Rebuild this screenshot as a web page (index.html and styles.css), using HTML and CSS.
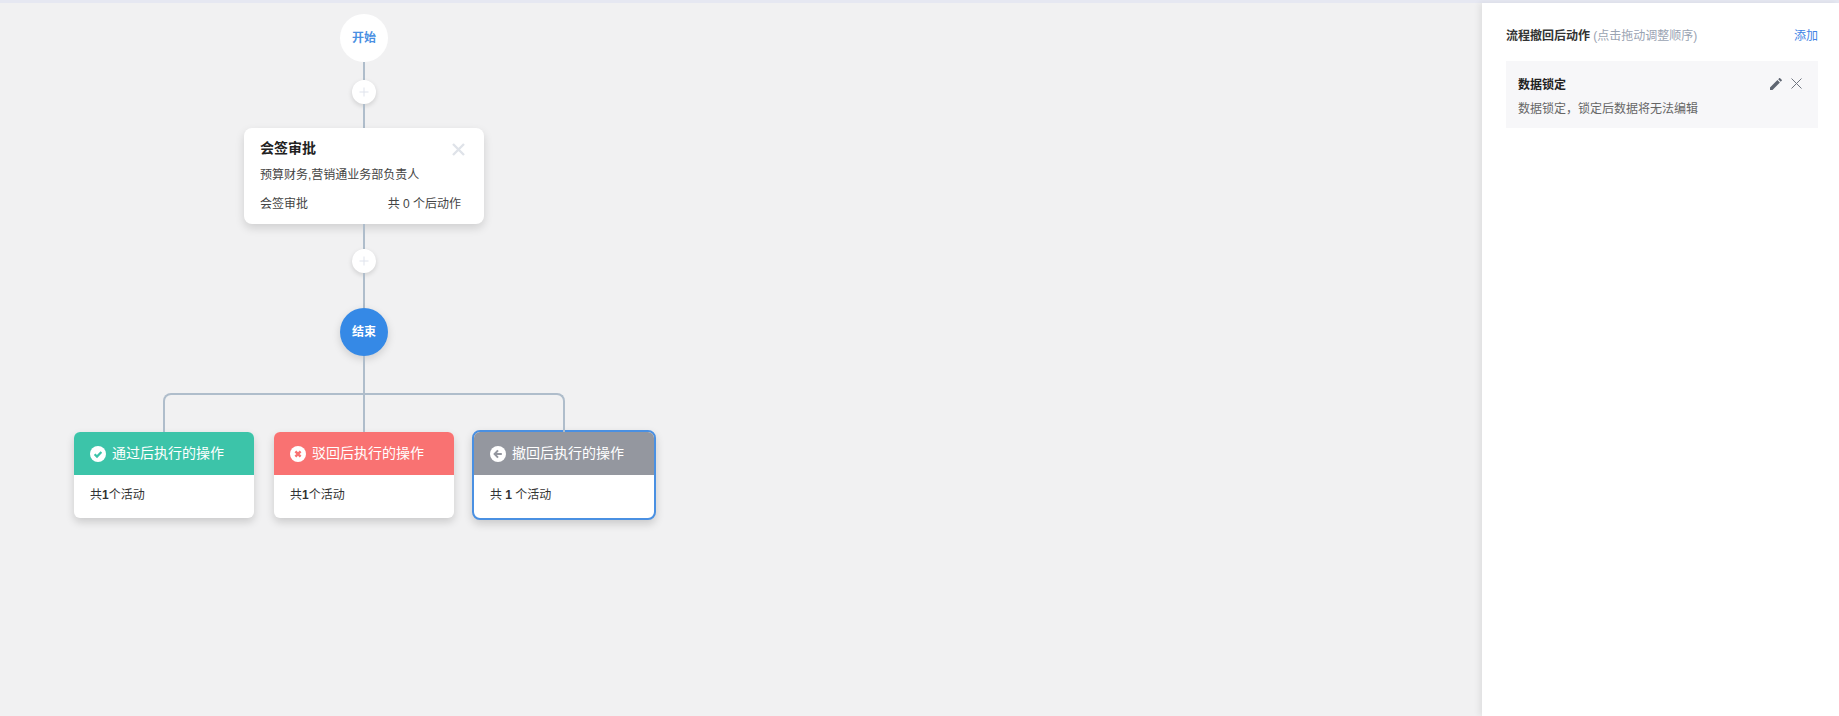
FILE: index.html
```html
<!DOCTYPE html>
<html lang="zh-CN">
<head>
<meta charset="utf-8">
<title>流程</title>
<link rel="stylesheet" href="styles.css">
</head>
<body>
<div class="page">
  <main class="canvas">
    <div class="flow">
      <div class="node node-start"><span>开始</span></div>
      <div class="line h18"></div>
      <button class="plus"><svg width="10" height="10" viewBox="0 0 10 10"><path d="M5 0.5v9M0.5 5h9" stroke="#dfe3ec" stroke-width="1" fill="none"/></svg></button>
      <div class="line h24"></div>
      <section class="approval">
        <div class="approval-head">
          <h3>会签审批</h3>
          <svg class="approval-close" width="13" height="13" viewBox="0 0 13 13"><path d="M1 1l11 11M12 1L1 12" stroke="#dfe3e9" stroke-width="2.4" fill="none"/></svg>
        </div>
        <p class="approval-people">预算财务,营销通业务部负责人</p>
        <div class="approval-foot"><span>会签审批</span><span>共 0 个后动作</span></div>
      </section>
      <div class="line h25"></div>
      <button class="plus"><svg width="10" height="10" viewBox="0 0 10 10"><path d="M5 0.5v9M0.5 5h9" stroke="#dfe3ec" stroke-width="1" fill="none"/></svg></button>
      <div class="line h35"></div>
      <div class="node node-end"><span>结束</span></div>
      <div class="line h37"></div>
      <div class="branch"></div>
      <div class="results">
        <article class="result">
          <header class="result-head green">
            <svg width="16" height="16" viewBox="0 0 16 16"><circle cx="8" cy="8" r="8" fill="#fff"/><path d="M4.6 8.2l2.4 2.4 4.4-4.6" stroke="#3cc4a9" stroke-width="2.2" fill="none"/></svg>
            <span>通过后执行的操作</span>
          </header>
          <div class="result-body">共<b>1</b>个活动</div>
        </article>
        <article class="result">
          <header class="result-head red">
            <svg width="16" height="16" viewBox="0 0 16 16"><circle cx="8" cy="8" r="8" fill="#fff"/><path d="M5.4 5.4l5.2 5.2M10.6 5.4l-5.2 5.2" stroke="#f97272" stroke-width="2.4" fill="none"/></svg>
            <span>驳回后执行的操作</span>
          </header>
          <div class="result-body">共<b>1</b>个活动</div>
        </article>
        <article class="result selected">
          <header class="result-head grey">
            <svg width="16" height="16" viewBox="0 0 16 16"><circle cx="8" cy="8" r="8" fill="#fff"/><path d="M8 4.4L4.6 8 8 11.6M5 8h6.8" stroke="#94979f" stroke-width="2" fill="none"/></svg>
            <span>撤回后执行的操作</span>
          </header>
          <div class="result-body">共 <b>1</b> 个活动</div>
        </article>
      </div>
    </div>
  </main>
  <aside class="panel">
    <div class="panel-head">
      <div><strong>流程撤回后动作</strong> <span class="hint">(点击拖动调整顺序)</span></div>
      <a class="add">添加</a>
    </div>
    <div class="action">
      <div class="action-top">
        <strong>数据锁定</strong>
        <div class="action-icons">
          <svg width="12" height="12" viewBox="0 0 12 12"><path d="M0 12V9.5L7.4 2.1l2.5 2.5L2.5 12zM8.2 1.3L9.4.1a.4.4 0 0 1 .5 0l2 2a.4.4 0 0 1 0 .5l-1.2 1.2z" fill="#5f6672"/></svg>
          <svg width="11" height="11" viewBox="0 0 11 11"><path d="M.5.5l10 10M10.5.5l-10 10" stroke="#6f7580" stroke-width="1" fill="none"/></svg>
        </div>
      </div>
      <p>数据锁定，锁定后数据将无法编辑</p>
    </div>
  </aside>
</div>
</body>
</html>
```
FILE: styles.css
```css
* { box-sizing: border-box; }
html, body { margin: 0; height: 100%; overflow: hidden; }
body {
  font-family: "Liberation Sans", "Noto Sans CJK SC", sans-serif;
  font-size: 12px;
  color: #333;
  background: #f1f1f2;
}
.page {
  display: flex;
  height: 716px;
  border-top: 3px solid #e6e8f2;
}
.canvas { flex: 1; min-width: 0; padding: 11px 0 0 74px; }
.flow { width: 580px; display: flex; flex-direction: column; align-items: center; }
.node {
  width: 48px; height: 48px; border-radius: 50%;
  display: flex; align-items: center; justify-content: center;
  font-weight: 700; font-size: 12px;
  flex: none;
  padding-bottom: 3px;
}
.node-start { background: #fff; color: #4a90e2; }
.node-end { background: #3589e6; color: #fff; box-shadow: 0 3px 8px rgba(0,0,0,.15); }
.line { width: 2px; background: #afbdcb; flex: none; }
.h18 { height: 18px; }
.h24 { height: 24px; }
.h25 { height: 25px; }
.h35 { height: 35px; }
.h37 { height: 37px; }
.plus {
  width: 24px; height: 24px; padding: 0; border: 0; border-radius: 50%;
  background: #fff; display: flex; align-items: center; justify-content: center;
  box-shadow: 0 2px 5px rgba(0,0,0,.14); flex: none;
}
.approval {
  width: 240px; height: 96px; flex: none;
  background: #fff; border-radius: 8px;
  padding: 10px 23px 0 16px;
  box-shadow: 0 4px 10px rgba(0,0,0,.14);
}
.approval-head { display: flex; justify-content: space-between; align-items: center; height: 20px; }
.approval-head h3 { margin: 0; font-size: 14px; font-weight: 700; color: #222; line-height: 20px; }
.approval-close { margin-right: -4px; margin-top: 2px; }
.approval-people { margin: 8px 0 0; line-height: 18px; color: #444; }
.approval-foot { display: flex; justify-content: space-between; margin-top: 11px; line-height: 18px; color: #444; }
.branch {
  width: 402px; height: 39px; flex: none; position: relative;
  border: 2px solid #afbdcb; border-bottom: 0; border-radius: 8px 8px 0 0;
}
.branch::after {
  content: ""; position: absolute; left: 198px; top: -2px; bottom: 0; width: 2px; background: #afbdcb;
}
.results { display: flex; gap: 20px; align-self: stretch; flex: none; align-items: flex-start; }
.result {
  width: 180px; height: 86px; border-radius: 6px; overflow: hidden; background: #fff;
  box-shadow: 0 4px 8px rgba(0,0,0,.16);
  flex: none;
}
.result.selected {
  width: 184px; height: 90px; margin: -2px 0 0 -2px;
  border: 2px solid #4a90e2;
  border-radius: 8px;
}
.result-head {
  height: 43px; display: flex; align-items: center; gap: 6px;
  padding: 0 0 3px 16px; color: #fff; font-size: 14px;
}
.result-head svg { margin-top: 3px; }
.green { background: #3cc4a9; }
.red { background: #f97272; }
.grey { background: #94979f; }
.result-body { padding: 11px 16px 0; line-height: 18px; color: #333; }
.panel {
  width: 357px; flex: none; background: #fff;
  padding: 24px 21px 0 24px;
  box-shadow: -3px 0 6px rgba(0,0,0,.07);
}
.panel-head { display: flex; justify-content: space-between; line-height: 18px; }
.panel-head strong { color: #333; }
.hint { color: #9aa3b2; }
.add { color: #3e82e4; }
.action {
  margin-top: 16px; height: 67px; background: #f7f7f9; padding: 15px 12px 0;
}
.action-top { display: flex; justify-content: space-between; align-items: center; line-height: 18px; }
.action-top strong { color: #222; }
.action-icons { display: flex; gap: 7px; align-items: center; margin-top: -3px; margin-right: 4px; margin-left: auto; }
.action-icons svg:first-child { margin-right: 2px; }
.action p { margin: 6px 0 0; line-height: 18px; color: #666; }
```
